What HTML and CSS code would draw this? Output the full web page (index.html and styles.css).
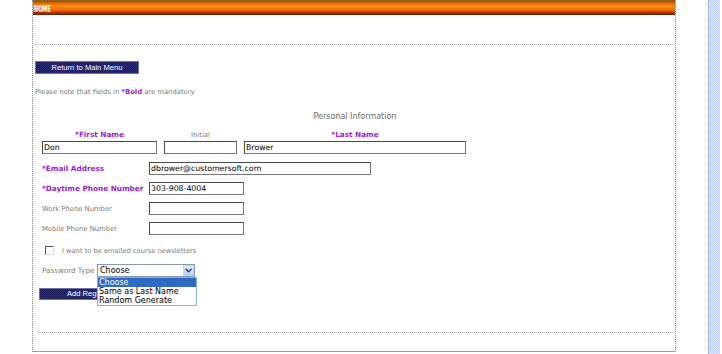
FILE: index.html
```html
<!DOCTYPE html>
<html>
<head>
<meta charset="utf-8">
<title>Registration</title>
<link rel="stylesheet" href="styles.css">
</head>
<body>
<div class="page">
  <div class="frame">
    <div class="topbar"><span class="home">HOME</span></div>
    <div class="header"></div>
    <div class="content">
      <button class="navbtn" type="button">Return to Main Menu</button>
      <p class="note">Please note that fields in <b class="req">*Bold</b> are mandatory.</p>
      <div class="section-title">Personal Information</div>
      <div class="names">
        <label class="req">*First Name</label>
        <label class="plain">Initial</label>
        <label class="req">*Last Name</label>
        <input class="field" type="text" value="Don">
        <input class="field" type="text" value="">
        <input class="field" type="text" value="Brower">
      </div>
      <div class="row">
        <label class="req">*Email Address</label>
        <input class="field w-long" type="text" value="dbrower@customersoft.com">
      </div>
      <div class="row">
        <label class="req">*Daytime Phone Number</label>
        <input class="field w-short" type="text" value="303-908-4004">
      </div>
      <div class="row">
        <label class="plain">Work Phone Number</label>
        <input class="field w-short" type="text" value="">
      </div>
      <div class="row">
        <label class="plain">Mobile Phone Number</label>
        <input class="field w-short" type="text" value="">
      </div>
      <div class="check-row">
        <span class="checkbox"></span>
        <span class="plain">I want to be emailed course newsletters</span>
      </div>
      <div class="pw-row">
        <span class="pw-label plain">Password Type</span>
        <div class="select">
          <span class="select-value">Choose</span>
          <span class="select-arrow"><svg width="7" height="5" viewBox="0 0 7 5"><path d="M0.5 0.8 L3.5 3.8 L6.5 0.8" fill="none" stroke="#2a3f7a" stroke-width="1.4"/></svg></span>
          <ul class="options">
            <li class="selected">Choose</li>
            <li>Same as Last Name</li>
            <li>Random Generate</li>
          </ul>
        </div>
      </div>
      <button class="navbtn addbtn" type="button">Add Registration</button>
    </div>
    <div class="footer-line"></div>
  </div>
  <div class="strip"></div>
</div>
</body>
</html>
```
FILE: styles.css
```css
* { box-sizing: border-box; }
html, body { margin: 0; padding: 0; background: #fff; }
body { font-family: "DejaVu Sans", Verdana, sans-serif; color: #7a7a7a; }

.page { display: flex; height: 354px; padding-left: 32px; }

.frame {
  width: 644px;
  height: 352px;
  border-left: 1px dotted #8a8a8a;
  border-right: 1px dotted #8a8a8a;
  border-bottom: 1px solid #9a9a9a;
  display: flex;
  flex-direction: column;
}

.topbar {
  height: 15px;
  background: linear-gradient(to bottom,
    #8a5a1c 0, #b05a08 2px, #e46a00 3px, #f88a18 6px, #f07410 9px,
    #e05c00 11px, #b83c00 12px, #8a2400 14px, #6a1800 15px);
  overflow: hidden;
}
.home {
  display: inline-block;
  color: #fff;
  font: bold 8px/15px "DejaVu Sans", sans-serif;
  transform: scaleX(0.62);
  transform-origin: left center;
  margin-left: 1px;
  position: relative;
  top: -3px;
}

.header { height: 30px; margin: 0 2px; border-bottom: 1px dotted #b0b0b0; }

.content { padding-left: 2px; }

.navbtn {
  display: block;
  margin: 16px 0 0;
  width: 104px;
  height: 13px;
  padding: 0;
  border: 1px solid #7070a8;
  background: #24246a repeating-conic-gradient(#1a1a58 0 25%, #2e2e7a 0 50%) 0 0 / 2px 2px;
  color: #fff;
  font: 7.6px/11px "Liberation Sans", Arial, sans-serif;
  text-align: center;
}

.note {
  margin: 13px 0 0;
  font-size: 6.8px;
  line-height: 10px;
  height: 10px;
}
.req { color: #9a22d8; font-weight: bold; }
.plain { color: #7a7a7a; }

.section-title {
  margin-top: 15px;
  text-align: center;
  font-size: 8px;
  line-height: 10px;
  color: #6a6a6a;
}

.names {
  margin: 8px 0 0 7px;
  display: grid;
  grid-template-columns: 115px 73px 222px;
  column-gap: 7px;
  row-gap: 1px;
}
.names label { text-align: center; font-size: 6.8px; line-height: 10px; }
.names label.req { font-size: 7.3px; }

.field {
  display: block;
  height: 13px;
  margin: 0;
  padding: 0 1px;
  border: 1px solid #4a4a4a;
  border-right-color: #777;
  border-bottom-color: #777;
  background: #fff;
  font: 7.8px/11px "DejaVu Sans", Tahoma, sans-serif;
  color: #000;
  width: 100%;
  outline: none;
}
.w-long { width: 222px; }
.w-short { width: 95px; }

.row {
  margin: 8px 0 0 7px;
  display: grid;
  grid-template-columns: 107px auto;
  align-items: center;
  height: 13px;
}
.row + .row { margin-top: 7px; }
.row label { font-size: 6.8px; line-height: 10px; white-space: nowrap; }
.row label.req { font-size: 7.3px; }

.check-row {
  margin: 11px 0 0 10px;
  display: flex;
  align-items: center;
  height: 9px;
  font-size: 6.7px;
}
.checkbox {
  width: 9px;
  height: 9px;
  border-top: 1px solid #555;
  border-left: 1px solid #555;
  border-right: 1px solid #e2e2e2;
  border-bottom: 1px solid #e2e2e2;
  margin-right: 8px;
  background: #fff;
}

.pw-row {
  margin: 9px 0 0 7px;
  display: flex;
  align-items: center;
  height: 13px;
}
.pw-label {
  width: 55px;
  white-space: nowrap;
  font-size: 7.2px;
  line-height: 10px;
}
.select {
  position: relative;
  z-index: 2;
  width: 98px;
  height: 13px;
  border: 1px solid #7f9db9;
  background: #fff;
  color: #000;
  font: 8px/11px "DejaVu Sans", Tahoma, sans-serif;
  padding-left: 2px;
}
.select-arrow {
  position: absolute;
  right: 0;
  top: 0;
  width: 11px;
  height: 11px;
  background: linear-gradient(#e6eeff, #b9cdf5);
  border: 1px solid #c2d3f5;
  display: flex;
  align-items: center;
  justify-content: center;
}
.options {
  position: absolute;
  left: -1px;
  top: 12px;
  width: 100px;
  margin: 0;
  padding: 0;
  list-style: none;
  background: #fff;
  border: 1px solid #8ab0c4;
}
.options li {
  height: 9px;
  line-height: 9px;
  padding-left: 1px;
  white-space: nowrap;
  color: #000;
}
.options li.selected { background: #316ac5; color: #fff; }

.addbtn {
  margin: 11px 0 0 4px;
  width: 112px;
  height: 12px;
  line-height: 10px;
  font-size: 7.6px;
}

.footer-line {
  margin: auto 2px 18px 5px;
  border-bottom: 1px dotted #b0b0b0;
}

.strip {
  margin-left: 32px;
  width: 12px;
  height: 354px;
  border-left: 1px dotted #9a9a9a;
  background: #c4d6fb repeating-conic-gradient(#bccef8 0 25%, #e0e9ff 0 50%) 0 0 / 2px 2px;
}
```
